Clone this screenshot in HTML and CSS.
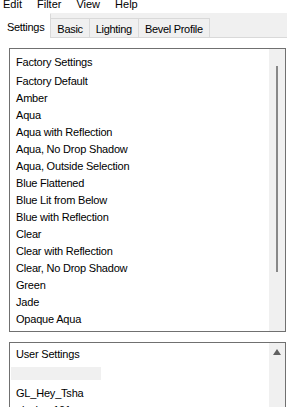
FILE: index.html
```html
<!DOCTYPE html>
<html lang="en">
<head>
    <meta charset="UTF-8">
    <meta name="viewport" content="width=device-width, initial-scale=1.0">
    <title>Bevel Settings</title>
    <link rel="stylesheet" href="styles.css">
</head>
<body>
    <div class="menubar">
        <span>Edit</span>
        <span>Filter</span>
        <span>View</span>
        <span>Help</span>
    </div>

    <div class="tabs">
        <div class="tab active">Settings</div>
        <div class="tab">Basic</div>
        <div class="tab">Lighting</div>
        <div class="tab">Bevel Profile</div>
    </div>

    <div class="panel">
        <!-- 기본 프리셋 목록 -->
        <div class="listbox factory">
            <div class="list">
                <div class="group">Factory Settings</div>
                <div class="item">Factory Default</div>
                <div class="item">Amber</div>
                <div class="item">Aqua</div>
                <div class="item">Aqua with Reflection</div>
                <div class="item">Aqua, No Drop Shadow</div>
                <div class="item">Aqua, Outside Selection</div>
                <div class="item">Blue Flattened</div>
                <div class="item">Blue Lit from Below</div>
                <div class="item">Blue with Reflection</div>
                <div class="item">Clear</div>
                <div class="item">Clear with Reflection</div>
                <div class="item">Clear, No Drop Shadow</div>
                <div class="item">Green</div>
                <div class="item">Jade</div>
                <div class="item">Opaque Aqua</div>
            </div>
            <div class="scrollbar">
                <div class="thumb"></div>
            </div>
        </div>

        <!-- 사용자 프리셋 목록 -->
        <div class="listbox user">
            <div class="list">
                <div class="group">User Settings</div>
                <div class="item blank"><div class="bar"></div></div>
                <div class="item">GL_Hey_Tsha</div>
                <div class="item">ulasha_101</div>
            </div>
            <div class="scrollbar">
                <svg class="arrow" width="8" height="6" viewBox="0 0 8 6">
                    <polygon points="4,0 8,6 0,6" fill="#606060"/>
                </svg>
            </div>
        </div>
    </div>
</body>
</html>
```

FILE: styles.css
```css
html,
body {
    height: 407px;
    overflow: hidden;
}

body {
    margin: 0;
    background-color: #fff;
    font-family: "Liberation Sans", Arial, sans-serif;
    font-size: 11px;
    color: #000;
}

/* 상단 메뉴 */
.menubar {
    display: flex;
    gap: 15px;
    height: 13px;
    padding-left: 3px;
    line-height: 11px;
    overflow: hidden;
}

.menubar span {
    margin-top: -1px;
}

/* 탭 */
.tabs {
    display: flex;
    align-items: flex-end;
    height: 24px;
    background-color: #f0f0f0;
    border-bottom: 1px solid #d9d9d9;
}

.tab {
    height: 17px;
    padding: 1px 6px 0;
    line-height: 18px;
    border: 1px solid #d9d9d9;
    border-bottom: none;
    margin-left: -1px;
    letter-spacing: -0.3px;
    white-space: nowrap;
}

.tab.active {
    height: 23px;
    padding-top: 1px;
    line-height: 24px;
    margin-left: 0;
    margin-bottom: -1px;
    background-color: #fff;
    border-color: #fff #d9d9d9 #fff #fff;
}

/* 패널 */
.panel {
    padding: 10px 1px 0 9px;
    background-color: #fff;
}

.listbox {
    display: flex;
    border: 1px solid #707070;
    background-color: #fff;
}

.factory {
    height: 282px;
}

.user {
    margin-top: 10px;
    height: 65px;
}

.list {
    flex: 1;
    padding: 5px 0 0 6px;
    letter-spacing: -0.2px;
    overflow: hidden;
}

.user .list {
    padding-top: 3px;
}

.group,
.item {
    height: 17px;
    line-height: 17px;
    white-space: nowrap;
}

.group {
    margin-bottom: 2px;
}

.item.blank {
    height: 18px;
}

.bar {
    width: 90px;
    height: 13px;
    margin: 4px 0 0 -5px;
    background-color: #f0f0f0;
}

/* 스크롤바 */
.scrollbar {
    flex: none;
    width: 16px;
    background-color: #f0f0f0;
}

.thumb {
    width: 2px;
    height: 206px;
    margin: 17px 0 0 7px;
    background-color: #888;
}

.arrow {
    display: block;
    margin: 6px 0 0 4px;
}
```
